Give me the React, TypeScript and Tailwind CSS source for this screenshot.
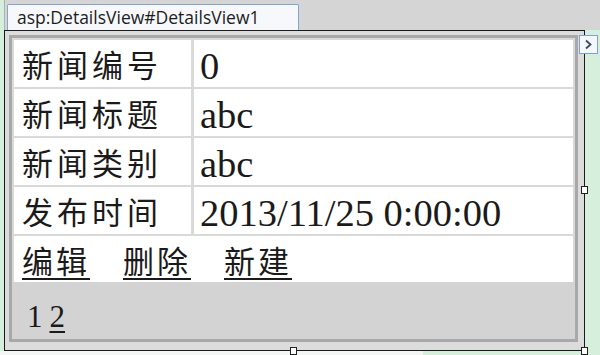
import React from "react";

const labelFont = { fontFamily: '"Noto Sans CJK SC", "Noto Sans", sans-serif' };
const serifFont = { fontFamily: '"Liberation Serif", "Noto Sans CJK SC", serif' };

function Row({ label, value }: { label: string; value: string }) {
  return (
    <div className="flex h-[47px] gap-[3px]">
      <div
        className="w-[177px] bg-white flex items-center pl-[8px] text-[31px] tracking-[4px] text-[#1a1a1a] leading-none"
        style={labelFont}
      >
        {label}
      </div>
      <div
        className="flex-1 bg-white flex items-center pl-[6px] pt-[5px] text-[38.5px] text-[#1a1a1a] leading-none"
        style={serifFont}
      >
        {value}
      </div>
    </div>
  );
}

export default function App() {
  return (
    <div className="w-[600px] h-[355px] bg-[#d6efdd] overflow-hidden relative flex flex-col">
      {/* top bar with tab */}
      <div className="h-[30px] ml-[4px] bg-[#d5d5d5] border-l border-[#a9b3ad] flex items-end">
        <div
          className="ml-[2px] h-[26px] w-[292px] border border-b-0 border-[#86a3d6] bg-[#f6f8fb] rounded-t-[2px] flex items-center pl-[9px] text-[17.5px] text-[#1c1c1c] leading-none"
          style={{ fontFamily: '"Open Sans", "Noto Sans", sans-serif' }}
        >
          asp:DetailsView#DetailsView1
        </div>
      </div>

      {/* design frame */}
      <div className="flex">
        <div className="ml-[4px] w-[581px] h-[321px] border border-[#1a1a1a] bg-[#dcdcdc] pt-[4px] pl-[4px] pr-[6px] pb-[8px]">
          <div className="w-full h-full border-[3px] border-[#a8a8a8] bg-[#d9d9d9] flex flex-col">
            <div className="flex flex-col gap-[2px] pt-[2px] px-[2px]">
              <Row label="新闻编号" value="0" />
              <Row label="新闻标题" value="abc" />
              <Row label="新闻类别" value="abc" />
              <Row label="发布时间" value="2013/11/25 0:00:00" />
              <div
                className="h-[46px] bg-white flex items-center pl-[8px] gap-[33px] text-[31px] tracking-[3px] text-[#1a1a1a] leading-none"
                style={labelFont}
              >
                <span className="underline underline-offset-[5px] decoration-[2px]">编辑</span>
                <span className="underline underline-offset-[5px] decoration-[2px]">删除</span>
                <span className="underline underline-offset-[5px] decoration-[2px]">新建</span>
              </div>
            </div>
            <div
              className="flex-1 bg-[#d3d3d3] flex items-center pl-[15px] pt-[12px] text-[31px] text-[#1a1a1a] leading-none"
              style={serifFont}
            >
              <span>1</span>
              <span className="ml-[7px] underline underline-offset-[4px] decoration-[2px]">2</span>
            </div>
          </div>
        </div>
      </div>

      {/* bottom strip */}
      <div className="flex-1 flex">
        <div className="w-[423px] bg-[#f4f6f5]" />
      </div>

      {/* smart tag */}
      <div className="absolute left-[579px] top-[35px] w-[19px] h-[19px] border border-[#7f9fd8] bg-[#f4f7fc] flex items-center justify-center">
        <svg width="9" height="11" viewBox="0 0 9 11">
          <path d="M2 1.5 L6.5 5.5 L2 9.5" fill="none" stroke="#3f4a5c" strokeWidth="1.8" />
        </svg>
      </div>

      {/* resize handles */}
      <div className="absolute left-[581px] top-[186px] w-[7px] h-[8px] bg-white border border-[#222]" />
      <div className="absolute left-[290px] top-[347px] w-[7px] h-[8px] bg-white border border-[#222]" />
      <div className="absolute left-[581px] top-[347px] w-[7px] h-[8px] bg-white border border-[#222]" />
    </div>
  );
}
